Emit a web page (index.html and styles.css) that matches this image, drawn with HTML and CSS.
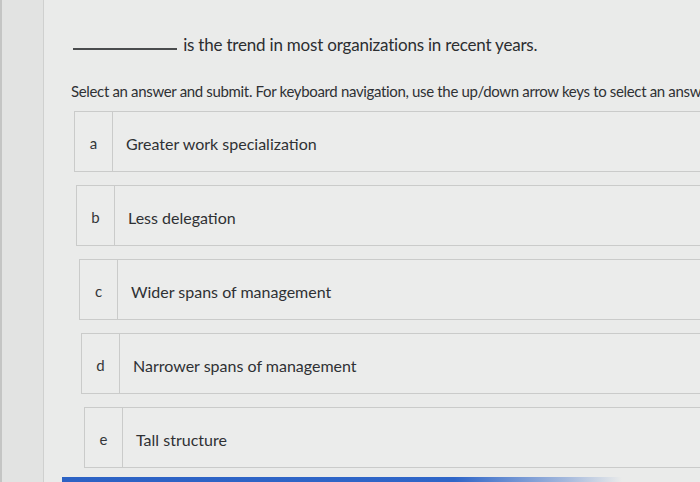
FILE: index.html
```html
<!DOCTYPE html>
<html lang="en">
<head>
<meta charset="utf-8">
<title>Question</title>
<link rel="stylesheet" href="styles.css">
</head>
<body>
<div class="screen">
  <div class="gutter"></div>
  <main class="page">
    <h1 class="question"><span class="blank"></span> is the trend in most organizations in recent years.</h1>
    <p class="hint">Select an answer and submit. For keyboard navigation, use the up/down arrow keys to select an answer.</p>
    <ul class="options">
      <li class="option opt-a"><span class="letter">a</span><span class="answer">Greater work specialization</span></li>
      <li class="option opt-b"><span class="letter">b</span><span class="answer">Less delegation</span></li>
      <li class="option opt-c"><span class="letter">c</span><span class="answer">Wider spans of management</span></li>
      <li class="option opt-d"><span class="letter">d</span><span class="answer">Narrower spans of management</span></li>
      <li class="option opt-e"><span class="letter">e</span><span class="answer">Tall structure</span></li>
    </ul>
  </main>
</div>
<div class="submit-bar"></div>
</body>
</html>
```

FILE: styles.css
```css
html, body {
  margin: 0;
  padding: 0;
  width: 700px;
  height: 482px;
  overflow: hidden;
}

body {
  position: relative;
  background: #e8e9e8;
  font-family: "Lato", "Liberation Sans", sans-serif;
  color: #2f3134;
}

.screen {
  display: flex;
  height: 482px;
}

.gutter {
  width: 44px;
  flex: none;
  background: #e2e3e2;
  border-left: 2px solid #c4c5c4;
  border-right: 1px solid #cfd0cf;
  box-sizing: border-box;
}

.page {
  flex: 1;
  min-width: 0;
  padding: 33px 0 0 29px;
  background: #eaebea;
}

.question {
  margin: 0;
  font-size: 17px;
  font-weight: 400;
  line-height: 24px;
  letter-spacing: -0.2px;
  white-space: nowrap;
  color: #2c2e31;
}

.blank {
  display: inline-block;
  width: 104px;
  border-bottom: 2px solid #4a4c4e;
  vertical-align: 1px;
  margin-right: 2px;
}

.hint {
  margin: 23px 0 0 -2px;
  font-size: 15px;
  line-height: 22px;
  letter-spacing: -0.34px;
  white-space: nowrap;
  color: #2f3134;
}

.options {
  list-style: none;
  margin: 9px -60px 0 0;
  padding: 0;
  display: flex;
  flex-direction: column;
  gap: 13px;
}

.option {
  display: flex;
  height: 61px;
  box-sizing: border-box;
  border: 1px solid #cacbca;
  border-right: none;
  background: #ebeceb;
}

.opt-a { margin-left: 1px; }
.opt-b { margin-left: 3px; }
.opt-c { margin-left: 6px; }
.opt-d { margin-left: 8px; }
.opt-e { margin-left: 11px; }

.letter {
  width: 37px;
  flex: none;
  display: flex;
  align-items: center;
  justify-content: center;
  padding-top: 3px;
  border-right: 1px solid #cacbca;
  font-size: 15px;
  color: #35373a;
}

.answer {
  display: flex;
  align-items: center;
  padding: 3px 0 0 13px;
  font-size: 16px;
  color: #2f3134;
}

.submit-bar {
  position: absolute;
  left: 62px;
  bottom: 0;
  width: 560px;
  height: 5px;
  background: linear-gradient(to right, #2c62c4 0%, #2f66c8 70%, rgba(60,110,200,0.4) 90%, rgba(200,205,205,0) 100%);
}
```
